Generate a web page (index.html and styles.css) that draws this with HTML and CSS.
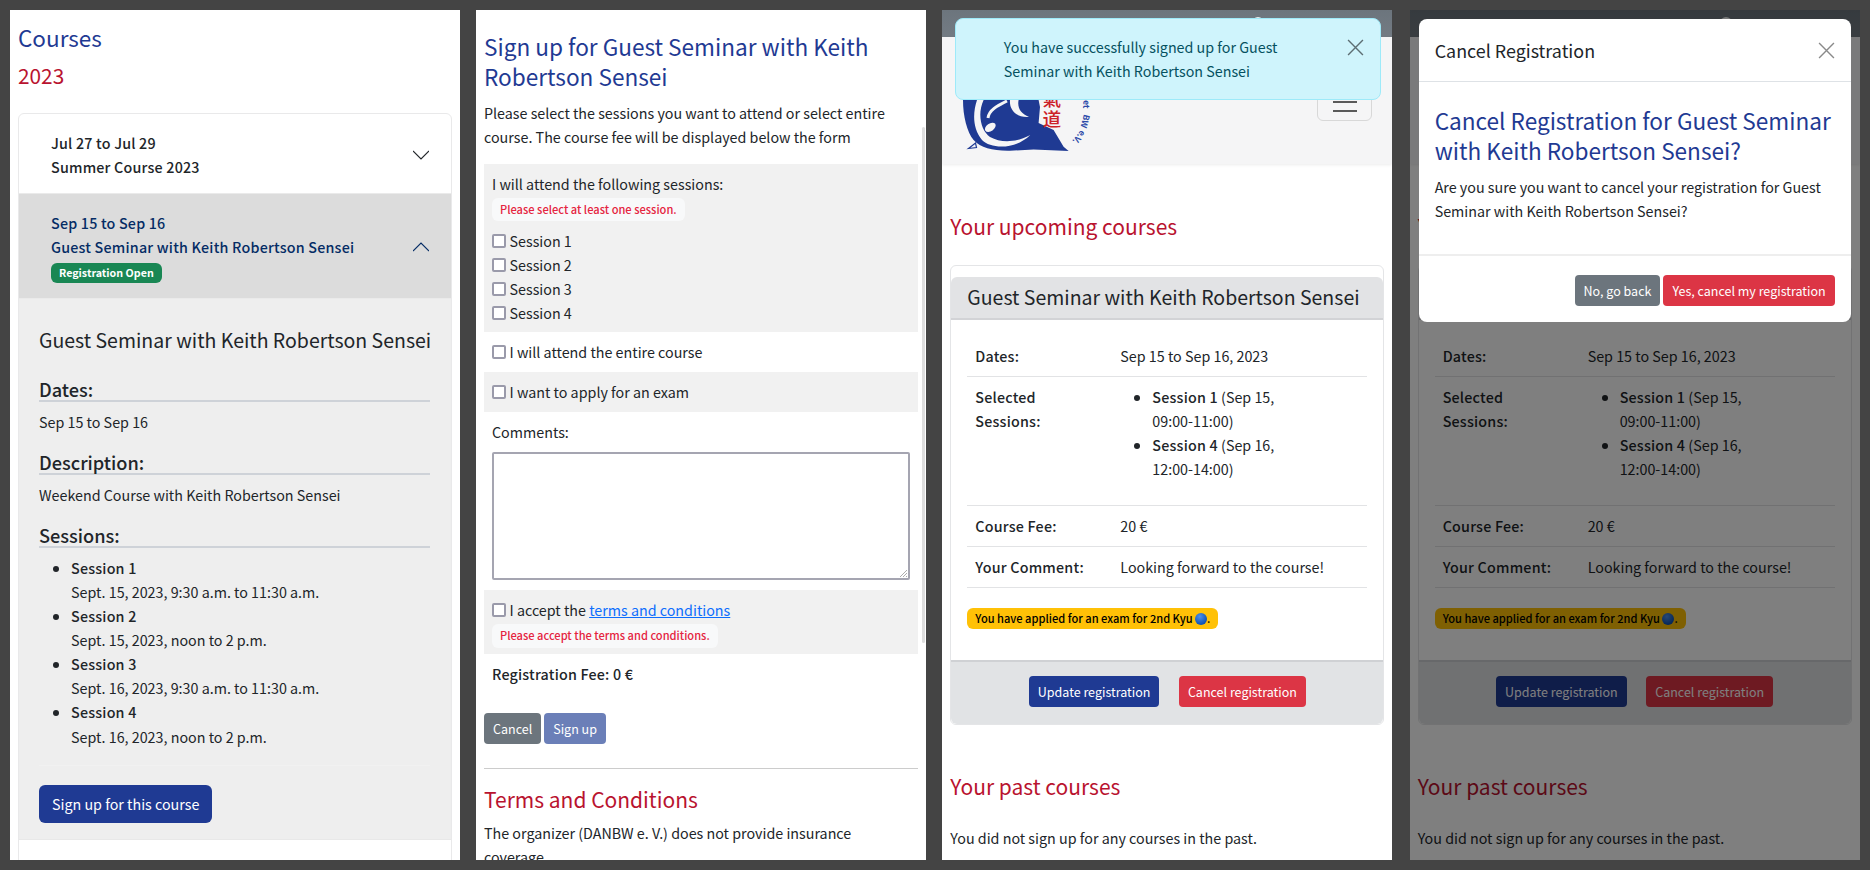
FILE: index.html
```html
<!DOCTYPE html>
<html lang="en">
<head>
<meta charset="utf-8">
<title>Courses</title>
<link rel="stylesheet" href="styles.css">
</head>
<body>
<main class="board">

<section class="panel panel-courses">
  <h1 class="h-courses">Courses</h1>
  <h2 class="h-year">2023</h2>
  <div class="accordion">
    <div class="acc-head">
      <div class="acc-text"><div>Jul 27 to Jul 29</div><div>Summer Course 2023</div></div>
      <svg class="chev" viewBox="0 0 16 16"><path d="M0 4 L8 12 L16 4" fill="none" stroke="#212529" stroke-width="1.1"/></svg>
    </div>
    <div class="acc-head acc-open">
      <div class="acc-text"><div>Sep 15 to Sep 16</div><div>Guest Seminar with Keith Robertson Sensei</div><span class="badge badge-green">Registration Open</span></div>
      <svg class="chev" viewBox="0 0 16 16"><path d="M0 12 L8 4 L16 12" fill="none" stroke="#052c65" stroke-width="1.1"/></svg>
    </div>
    <div class="acc-body">
      <h3 class="h-title">Guest Seminar with Keith Robertson Sensei</h3>
      <h4 class="h-sec h-sec-first">Dates:</h4>
      <p class="sec-p">Sep 15 to Sep 16</p>
      <h4 class="h-sec">Description:</h4>
      <p class="sec-p">Weekend Course with Keith Robertson Sensei</p>
      <h4 class="h-sec">Sessions:</h4>
      <ul class="sess">
        <li><span class="med">Session 1</span><br>Sept. 15, 2023, 9:30 a.m. to 11:30 a.m.</li>
        <li><span class="med">Session 2</span><br>Sept. 15, 2023, noon to 2 p.m.</li>
        <li><span class="med">Session 3</span><br>Sept. 16, 2023, 9:30 a.m. to 11:30 a.m.</li>
        <li><span class="med">Session 4</span><br>Sept. 16, 2023, noon to 2 p.m.</li>
      </ul>
      <div class="faint-hr"></div>
      <a class="btn btn-lg btn-blue">Sign up for this course</a>
    </div>
    <div class="acc-tail"></div>
  </div>
</section>

<section class="panel panel-form">
  <h2 class="h-blue h-form">Sign up for Guest Seminar with Keith Robertson Sensei</h2>
  <p class="intro">Please select the sessions you want to attend or select entire course. The course fee will be displayed below the form</p>
  <div class="f-group f-grey f-sessions">
    <div>I will attend the following sessions:</div>
    <div class="err err-1">Please select at least one session.</div>
    <label class="chk"><span class="box"></span>Session 1</label>
    <label class="chk"><span class="box"></span>Session 2</label>
    <label class="chk"><span class="box"></span>Session 3</label>
    <label class="chk"><span class="box"></span>Session 4</label>
  </div>
  <div class="f-group f-row"><label class="chk"><span class="box"></span>I will attend the entire course</label></div>
  <div class="f-group f-row f-grey"><label class="chk"><span class="box"></span>I want to apply for an exam</label></div>
  <div class="f-group f-comments">
    <div>Comments:</div>
    <div class="textarea"><svg class="grip" viewBox="0 0 8 8"><path d="M1 8 L8 1 M4 8 L8 4 M7 8 L8 7" stroke="#999" stroke-width="0.8"/></svg></div>
  </div>
  <div class="f-group f-grey f-terms">
    <label class="chk"><span class="box"></span>I accept the&nbsp;<a class="link">terms and conditions</a></label>
    <div class="err err-2">Please accept the terms and conditions.</div>
  </div>
  <div class="fee">Registration Fee: 0 €</div>
  <div class="f-actions"><a class="btn btn-grey">Cancel</a><a class="btn btn-faded">Sign up</a></div>
  <hr class="f-hr">
  <h3 class="h-red h-terms">Terms and Conditions</h3>
  <p class="terms-p">The organizer (DANBW e. V.) does not provide insurance coverage.</p>
  <div class="scrollbar"></div>
</section>

<section class="panel panel-mine panel-toast">
  <div class="topbar"><i class="top-dot"></i><i class="top-dot top-dot-low"></i></div>
  <div class="navbar">
    <svg class="logo" viewBox="0 0 128 52">
      <path d="M0 0 C0 16 4 32 10.6 40 C18 48 30 51 47 50.7 L70.6 49.5 L105.6 51 L100.6 46.7 L90.6 30 L75.6 23 L77 7 L75.6 0 Z" fill="#1f3a93"/>
      <path d="M14 0 C10 12 9 28 19 40 C28 49 52 50 67.3 35 C52 43 38 43 27 37 C18 31 14 14 20.6 0 Z" fill="#f5f5f6"/>
      <path d="M44 1 C34 6 26 10 25 18" fill="none" stroke="#f5f5f6" stroke-width="3"/>
      <ellipse cx="27.3" cy="27.3" rx="6" ry="3.8" transform="rotate(-35 27.3 27.3)" fill="#f5f5f6"/>
      <path d="M47 0 C46 10 54 18 66 17 C58 14 54 8 55.6 0 Z" fill="#f5f5f6"/>
      <path d="M5.5 48.5 L12.5 43 L13.5 47.5 Z" fill="none" stroke="#1f3a93" stroke-width="1.2"/>
      <text class="logo-kanji" x="79.500" y="6">氣</text>
      <text class="logo-kanji" x="79.500" y="25.500">道</text>
      <text class="logo-ring" transform="translate(120.500 0) rotate(92)">et</text>
      <text class="logo-ring" transform="translate(121 14) rotate(105)">BW</text>
      <text class="logo-ring" transform="translate(118.300 29.800) rotate(130)">e.V.</text>
    </svg>
    <div class="toggler"><span></span><span></span><span></span></div>
  </div>
  <div class="mine-body">
    <h2 class="h-red h-up">Your upcoming courses</h2>
    <div class="card">
      <div class="card-head">Guest Seminar with Keith Robertson Sensei</div>
      <div class="card-body">
        <div class="t-row"><div class="t-l">Dates:</div><div>Sep 15 to Sep 16, 2023</div></div>
        <div class="t-row t-sel"><div class="t-l">Selected Sessions:</div><ul class="sel-list"><li><span class="med">Session 1</span> (Sep 15, <span class="nw">09:00-11:00)</span></li><li><span class="med">Session 4</span> (Sep 16, <span class="nw">12:00-14:00)</span></li></ul></div>
        <div class="t-row"><div class="t-l">Course Fee:</div><div>20 €</div></div>
        <div class="t-row"><div class="t-l">Your Comment:</div><div>Looking forward to the course!</div></div>
        <span class="badge badge-yellow">You have applied for an exam for 2nd Kyu <i class="dot"></i>.</span>
      </div>
      <div class="card-foot"><a class="btn btn-blue">Update registration</a><a class="btn btn-red">Cancel registration</a></div>
    </div>
    <h2 class="h-red h-past">Your past courses</h2>
    <p class="past-p">You did not sign up for any courses in the past.</p>
  </div>
  <div class="toast">
    <div class="toast-text">You have successfully signed up for Guest Seminar with Keith Robertson Sensei</div>
    <svg class="close close-toast" viewBox="0 0 16 16"><path d="M1 1 L15 15 M15 1 L1 15" stroke="#5d6e73" stroke-width="1.3"/></svg>
  </div>
</section>

<section class="panel panel-mine panel-modal">
  <div class="topbar"><i class="top-dot"></i><i class="top-dot top-dot-low"></i></div>
  <div class="navbar"></div>
  <div class="mine-body">
    <h2 class="h-red h-up">Your upcoming courses</h2>
    <div class="card">
      <div class="card-head">Guest Seminar with Keith Robertson Sensei</div>
      <div class="card-body">
        <div class="t-row"><div class="t-l">Dates:</div><div>Sep 15 to Sep 16, 2023</div></div>
        <div class="t-row t-sel"><div class="t-l">Selected Sessions:</div><ul class="sel-list"><li><span class="med">Session 1</span> (Sep 15, <span class="nw">09:00-11:00)</span></li><li><span class="med">Session 4</span> (Sep 16, <span class="nw">12:00-14:00)</span></li></ul></div>
        <div class="t-row"><div class="t-l">Course Fee:</div><div>20 €</div></div>
        <div class="t-row"><div class="t-l">Your Comment:</div><div>Looking forward to the course!</div></div>
        <span class="badge badge-yellow">You have applied for an exam for 2nd Kyu <i class="dot"></i>.</span>
      </div>
      <div class="card-foot"><a class="btn btn-blue">Update registration</a><a class="btn btn-red">Cancel registration</a></div>
    </div>
    <h2 class="h-red h-past">Your past courses</h2>
    <p class="past-p">You did not sign up for any courses in the past.</p>
  </div>
  <div class="backdrop"></div>
  <div class="modal">
    <div class="modal-head"><span>Cancel Registration</span><svg class="close" viewBox="0 0 16 16"><path d="M1 1 L15 15 M15 1 L1 15" stroke="#8a8a8a" stroke-width="1.3"/></svg></div>
    <div class="modal-body">
      <h2 class="h-blue h-modal">Cancel Registration for Guest Seminar with Keith Robertson Sensei?</h2>
      <p class="modal-p">Are you sure you want to cancel your registration for Guest Seminar with Keith Robertson Sensei?</p>
    </div>
    <div class="modal-foot"><a class="btn btn-grey">No, go back</a><a class="btn btn-red">Yes, cancel my registration</a></div>
  </div>
</section>

</main>
</body>
</html>
```

FILE: styles.css
```css
* { box-sizing: border-box; }
html, body { margin: 0; height: 100%; }
body {
  background: #444;
  font-family: "Noto Sans CJK SC", "Noto Sans", sans-serif;
  font-size: 14.3px;
  line-height: 24px;
  color: #212529;
  overflow: hidden;
}
h1, h2, h3, h4, p, ul { margin: 0; font-weight: 400; }
.board { display: flex; padding: 10px; height: 870px; gap: 16px; }
.panel { position: relative; flex: 0 0 450px; height: 850px; background: #fff; overflow: hidden; }
.panel-toast { margin-left: 0.33px; }
.panel-modal { margin-left: 1.33px; }
.med { font-weight: 500; letter-spacing: 0.2px; }
.nw { white-space: nowrap; }

/* panel 1 */
.panel-courses { padding: 0 8px; }
.h-courses { font-size: 22.5px; line-height: 34px; color: #1f3a93; margin-top: 10px; }
.h-year { font-size: 20.8px; line-height: 30px; color: #b9132f; margin-top: 6px; }
.accordion { margin-top: 23px; border: 1px solid #e9e9ea; border-radius: 6px; overflow: hidden; height: 760px; }
.acc-head { display: flex; justify-content: space-between; align-items: center; padding: 2px 22px 0 32px; height: 80px; font-weight: 500; letter-spacing: 0.2px; border-bottom: 1px solid #eaeaea; }
.acc-open { height: 105px; background: #dcdcdc; color: #052c65; }
.chev { width: 16px; height: 16px; }
.badge { display: block; width: max-content; border-radius: 6px; line-height: 12px; letter-spacing: 0; }
.badge-green { background: #198754; color: #fff; padding: 4px 8px; margin-top: 4px; font-size: 10.7px; font-weight: 700; }
.acc-body { background: #eee; padding: 27.5px 21px 16px 20px; height: 540.5px; border-bottom: 1px solid #e8e8e8; }
.h-title { font-size: 19.5px; line-height: 26px; white-space: nowrap; }
.h-sec { font-size: 18.2px; height: 26px; line-height: 26px; font-weight: 500; border-bottom: 2px solid #ced2d8; margin-top: 15px; }
.h-sec-first { margin-top: 23px; }
.sec-p { margin-top: 8px; }
.sess { padding-left: 32px; margin-top: 8px; }
.sess li { line-height: 24.15px; }
.faint-hr { height: 1px; background: #f1f1f1; margin-top: 16px; }
.btn { display: inline-flex; align-items: center; justify-content: center; height: 31px; padding: 0 9px; border-radius: 4px; font-size: 12.5px; color: #fff; white-space: nowrap; }
.btn-lg { height: 38px; font-size: 14.3px; padding: 0 13px; border-radius: 6px; margin-top: 19px; }
.btn-blue { background: #1f3a93; }
.btn-grey { background: #6c757d; }
.btn-faded { background: #6b7fb8; }
.btn-red { background: #dc3545; }

/* panel 2 */
.panel-form { padding: 0 8px; }
.h-blue { color: #1f3a93; }
.h-form { font-size: 22.6px; line-height: 30.5px; margin-top: 21.5px; }
.intro { margin-top: 8.5px; width: 425px; }
.f-group { padding: 0 8px; }
.f-grey { background: #f1f1f1; }
.f-sessions { margin-top: 15px; padding-top: 8px; height: 168px; }
.err { display: block; width: max-content; font-size: 11.1px; line-height: 15px; background: #f8f9fa; color: #e5243f; border-radius: 6px; padding: 4px 8px; font-weight: 500; }
.err-1 { margin: 2px 0 7.5px; }
.err-2 { margin-top: 1.5px; padding: 4.5px 8px; }
.chk { display: flex; align-items: center; line-height: 24px; }
.box { flex: none; width: 14px; height: 14px; background: #fff; border: 2px solid #9a9aaa; border-radius: 2px; margin-right: 3.5px; }
.f-row { height: 40px; display: flex; align-items: center; }
.f-comments { padding-top: 8px; }
.textarea { position: relative; height: 127.5px; margin-top: 8px; border: 2px solid #a5a5b1; border-radius: 2px; background: #fff; }
.grip { position: absolute; right: 1px; bottom: 1px; width: 8px; height: 8px; }
.f-terms { margin-top: 10px; padding-top: 8.5px; height: 64px; }
.link { color: #0d6efd; text-decoration: underline; }
.fee { margin-top: 8.7px; padding: 0 8px; font-weight: 500; letter-spacing: 0.2px; }
.f-actions { display: flex; gap: 3px; margin-top: 27px; }
.f-hr { border: 0; border-top: 1px solid #ccc; margin: 24px 0 0; }
.h-red { color: #b9132f; }
.h-terms { font-size: 21px; line-height: 28px; margin-top: 16px; }
.terms-p { margin-top: 8px; width: 410px; }
.scrollbar { position: absolute; right: 1px; top: 117px; width: 3px; height: 516px; background: #dedede; border-radius: 2px; }

/* panels 3 & 4 */
.topbar { height: 27px; background: linear-gradient(#6c757d, #737b83); display: flex; align-items: flex-start; gap: 59px; padding: 7px 0 0 310px; }
.top-dot { width: 12px; height: 12px; border-radius: 50%; background: #eef0f1; }
.top-dot-low { margin-top: 1.5px; }
.navbar { position: relative; height: 127px; background: #f5f5f6; box-shadow: 0 1px 3px rgba(0,0,0,.08); display: flex; justify-content: space-between; align-items: flex-end; padding: 0 20px 12px 20.4px; }
.logo { width: 128px; height: 52px; }
.logo-kanji { font-size: 18.7px; fill: #cc2229; font-weight: 500; }
.logo-ring { font-size: 8.5px; fill: #2c4aa8; font-weight: 700; }
.toggler { align-self: flex-start; margin-top: 46px; width: 55px; height: 38px; border: 1px solid #d8d8d8; border-radius: 6px; display: flex; flex-direction: column; justify-content: center; align-items: center; gap: 7px; }
.toggler span { display: block; width: 24px; height: 2px; background: #5a5a5a; }
.mine-body { padding: 0 8px; }
.h-up { font-size: 21px; line-height: 28px; margin-top: 48px; }
.card { margin-top: 24.5px; border: 1px solid #e4e5e7; border-radius: 6px; padding-top: 11px; height: 460px; display: flex; flex-direction: column; }
.card-head { background: #e2e3e5; border-bottom: 2px solid #d2d3d6; border-radius: 6px 6px 0 0; height: 43.5px; flex: none; padding-left: 16px; font-size: 19.5px; line-height: 40px; white-space: nowrap; }
.card-body { flex: 1; padding: 24px 16px 0; }
.t-row { display: grid; grid-template-columns: 145px 1fr; padding: 8px; border-bottom: 1px solid #e2e3e5; }
.t-row:first-child { padding-top: 0; }
.t-l { font-weight: 500; letter-spacing: 0.2px; }
.sel-list { padding: 0 40px 16px 32px; }
.t-sel .t-l { width: 90px; }
.badge-yellow { background: #ffc107; color: #000; margin-top: 19.5px; padding: 4px 8px; line-height: 12.3px; font-size: 11.1px; font-weight: 500; }
.dot { display: inline-block; width: 12px; height: 12px; border-radius: 50%; background: radial-gradient(circle at 40% 30%, #4e90ea, #0f53b5 70%); vertical-align: -2px; }
.card-foot { flex: none; height: 64px; background: #e1e3e5; border-top: 2px solid #cfd1d4; border-radius: 0 0 6px 6px; display: flex; justify-content: center; align-items: center; gap: 19.5px; padding-bottom: 2px; }
.h-past { font-size: 21px; line-height: 28px; margin-top: 47.5px; }
.past-p { margin-top: 25.5px; }
.toast { position: absolute; left: 13px; top: 8px; width: 425.5px; height: 81.5px; background: #cff4fc; border: 1px solid #9eeaf9; border-radius: 8px; color: #055160; padding: 15.7px 60px 0 47.5px; }
.close { width: 17px; height: 17px; flex: none; }
.close-toast { position: absolute; right: 16px; top: 20px; }
.backdrop { position: absolute; inset: 0; background: rgba(0,0,0,.5); }
.modal { position: absolute; left: 9px; top: 9px; width: 432px; height: 303px; background: #fff; border-radius: 8px; display: flex; flex-direction: column; }
.modal-head { height: 63px; flex: none; display: flex; justify-content: space-between; align-items: center; padding: 0 16px; font-size: 17.9px; border-bottom: 1px solid #dee2e6; }
.modal-body { flex: 1; padding: 23.5px 16px 0; }
.h-modal { font-size: 22.6px; line-height: 30.5px; }
.modal-p { margin-top: 8.5px; }
.modal-foot { flex: none; height: 68px; border-top: 2px solid #eee; display: flex; justify-content: flex-end; gap: 3px; padding: 19px 16px 0; }
```
